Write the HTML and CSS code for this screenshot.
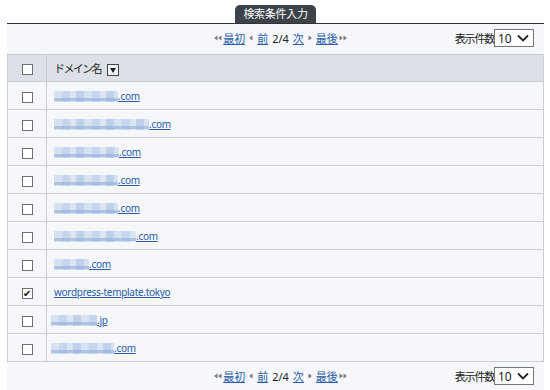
FILE: index.html
```html
<!DOCTYPE html>
<html lang="ja">
<head>
  <meta charset="UTF-8" />
  <title>ドメイン一覧</title>
  <link rel="stylesheet" href="styles.css">
</head>
<body>
  <div class="tab-bar">
    <span class="tab">検索条件入力</span>
  </div>

  <div class="panel">
    <div class="pager-row">
      <div class="pager">
        <svg class="arr" width="8" height="6" viewBox="0 0 8 6"><path d="M0 3 L3.5 0.5 L3.5 5.5 Z M4 3 L7.5 0.5 L7.5 5.5 Z" fill="#7d7d7d"/></svg><a href="#">最初</a>
        <svg class="arr single" width="4" height="6" viewBox="0 0 4 6"><path d="M0 3 L3.5 0.5 L3.5 5.5 Z" fill="#7d7d7d"/></svg><a href="#">前</a>
        <span class="page-no">2/4</span>
        <a href="#">次</a><svg class="arr single" width="4" height="6" viewBox="0 0 4 6"><path d="M4 3 L0.5 0.5 L0.5 5.5 Z" fill="#7d7d7d"/></svg>
        <a href="#">最後</a><svg class="arr" width="8" height="6" viewBox="0 0 8 6"><path d="M4 3 L0.5 0.5 L0.5 5.5 Z M8 3 L4.5 0.5 L4.5 5.5 Z" fill="#7d7d7d"/></svg>
      </div>
      <div class="per-page">
        <span class="label">表示件数</span>
        <div class="select"><span>10</span><svg width="12" height="8" viewBox="0 0 12 8"><path d="M1 1.5 L6 6.5 L11 1.5" fill="none" stroke="#222" stroke-width="1.8"/></svg></div>
      </div>
    </div>

    <table class="domain-table">
      <thead>
        <tr>
          <th class="check-col"><span class="box"></span></th>
          <th class="name-col"><span class="name-label">ドメイン名</span><span class="sort-btn"><svg width="12" height="12" viewBox="0 0 12 12"><rect x="0.5" y="0.5" width="11" height="11" fill="#eef0f3" stroke="#444"/><path d="M3 4 L9 4 L6 9 Z" fill="#222"/></svg></span></th>
        </tr>
      </thead>
      <tbody>
        <tr><td class="check-col"><span class="box"></span></td><td><a href="#"><span class="blur" style="width:64px"></span>.com</a></td></tr>
        <tr><td class="check-col"><span class="box"></span></td><td><a href="#"><span class="blur" style="width:95px"></span>.com</a></td></tr>
        <tr><td class="check-col"><span class="box"></span></td><td><a href="#"><span class="blur" style="width:65px"></span>.com</a></td></tr>
        <tr><td class="check-col"><span class="box"></span></td><td><a href="#"><span class="blur" style="width:64px"></span>.com</a></td></tr>
        <tr><td class="check-col"><span class="box"></span></td><td><a href="#"><span class="blur" style="width:64px"></span>.com</a></td></tr>
        <tr><td class="check-col"><span class="box"></span></td><td><a href="#"><span class="blur" style="width:82px"></span>.com</a></td></tr>
        <tr><td class="check-col"><span class="box"></span></td><td><a href="#"><span class="blur" style="width:35px"></span>.com</a></td></tr>
        <tr><td class="check-col"><span class="box checked">&#10004;</span></td><td><a href="#">wordpress-template.tokyo</a></td></tr>
        <tr><td class="check-col"><span class="box"></span></td><td><a href="#" class="shift"><span class="blur" style="width:46px"></span>.jp</a></td></tr>
        <tr><td class="check-col"><span class="box"></span></td><td><a href="#" class="shift"><span class="blur" style="width:63px"></span>.com</a></td></tr>
      </tbody>
    </table>

    <div class="pager-row">
      <div class="pager">
        <svg class="arr" width="8" height="6" viewBox="0 0 8 6"><path d="M0 3 L3.5 0.5 L3.5 5.5 Z M4 3 L7.5 0.5 L7.5 5.5 Z" fill="#7d7d7d"/></svg><a href="#">最初</a>
        <svg class="arr single" width="4" height="6" viewBox="0 0 4 6"><path d="M0 3 L3.5 0.5 L3.5 5.5 Z" fill="#7d7d7d"/></svg><a href="#">前</a>
        <span class="page-no">2/4</span>
        <a href="#">次</a><svg class="arr single" width="4" height="6" viewBox="0 0 4 6"><path d="M4 3 L0.5 0.5 L0.5 5.5 Z" fill="#7d7d7d"/></svg>
        <a href="#">最後</a><svg class="arr" width="8" height="6" viewBox="0 0 8 6"><path d="M4 3 L0.5 0.5 L0.5 5.5 Z M8 3 L4.5 0.5 L4.5 5.5 Z" fill="#7d7d7d"/></svg>
      </div>
      <div class="per-page">
        <span class="label">表示件数</span>
        <div class="select"><span>10</span><svg width="12" height="8" viewBox="0 0 12 8"><path d="M1 1.5 L6 6.5 L11 1.5" fill="none" stroke="#222" stroke-width="1.8"/></svg></div>
      </div>
    </div>
  </div>
</body>
</html>
```

FILE: styles.css
```css
html, body {
  margin: 0;
  padding: 0;
  height: 100%;
  background: #fff;
  font-family: 'Noto Sans', 'Noto Sans CJK JP', sans-serif;
  font-size: 11px;
  color: #222;
}

.tab-bar {
  margin: 0 6px 0 7px;
  padding-top: 5px;
  text-align: center;
  border-bottom: 1px solid #2e3337;
  line-height: 0;
}
.tab {
  display: inline-block;
  background: #3c444a;
  color: #fff;
  font-size: 11px;
  line-height: 18px;
  padding: 0 8px;
  border-radius: 5px 5px 0 0;
  letter-spacing: -0.3px;
}

.panel {
  margin: 0 6px 0 7px;
  background: #f5f7fb;
  min-height: 366px;
}

.pager-row {
  position: relative;
  height: 28px;
  display: flex;
  align-items: center;
  justify-content: center;
}
.pager-row + .domain-table {
  margin-top: 2px;
}

.pager {
  display: flex;
  align-items: center;
  font-size: 11px;
  margin-left: 10px;
}
.pager a {
  color: #2a5ca8;
  text-decoration: underline;
}
.pager .arr {
  margin: 0 1px;
}
.pager .arr.single {
  margin: 0 4px;
}
.page-no {
  margin: 0 4px;
}

.per-page {
  position: absolute;
  right: 10px;
  top: 5px;
  display: flex;
  align-items: center;
  font-size: 11px;
}
.per-page .label {
  letter-spacing: -1.2px;
}
.select {
  border: 1px solid #767676;
  background: #fff;
  display: flex;
  align-items: center;
  justify-content: space-between;
  padding: 0 4px 0 3px;
  box-sizing: border-box;
  width: 40px;
  height: 18px;
  font-size: 12px;
}

.domain-table {
  width: 100%;
  border-collapse: collapse;
  background: #f5f7fb;
}
.domain-table th,
.domain-table td {
  border: 1px solid #c9ccd1;
  height: 27px;
  padding: 0;
  text-align: left;
  vertical-align: middle;
}
.domain-table th {
  background: #dde1e7;
  font-weight: normal;
  height: 26px;
}
.check-col {
  width: 38px;
  text-align: center !important;
}
.name-col {
  padding-left: 7px !important;
}
.name-label {
  letter-spacing: -1.6px;
}
.domain-table td + td {
  padding-left: 7px;
}

.box {
  display: inline-block;
  width: 11px;
  height: 11px;
  box-sizing: border-box;
  border: 1px solid #6f6f6f;
  background: #fff;
  vertical-align: middle;
  font-size: 10px;
  line-height: 9px;
  color: #111;
  text-align: center;
}

.sort-btn {
  display: inline-block;
  vertical-align: middle;
  margin-left: 6px;
  line-height: 0;
}

.domain-table td a {
  color: #2a5ca8;
  text-decoration: underline;
  font-size: 10px;
  letter-spacing: -0.3px;
}
.domain-table td a.shift {
  margin-left: -3px;
}

.blur {
  display: inline-block;
  height: 11px;
  vertical-align: -2px;
  background:
    linear-gradient(180deg, transparent 0, transparent 7px, rgba(140, 170, 215, 0.55) 7px, rgba(140, 170, 215, 0.55) 10px, transparent 10px),
    repeating-linear-gradient(90deg, #d7e2f1 0, #d7e2f1 8px, #c6d6ec 8px, #c6d6ec 16px, #dbe5f2 16px, #dbe5f2 22px, #bfd1ea 22px, #bfd1ea 30px);
}
```
